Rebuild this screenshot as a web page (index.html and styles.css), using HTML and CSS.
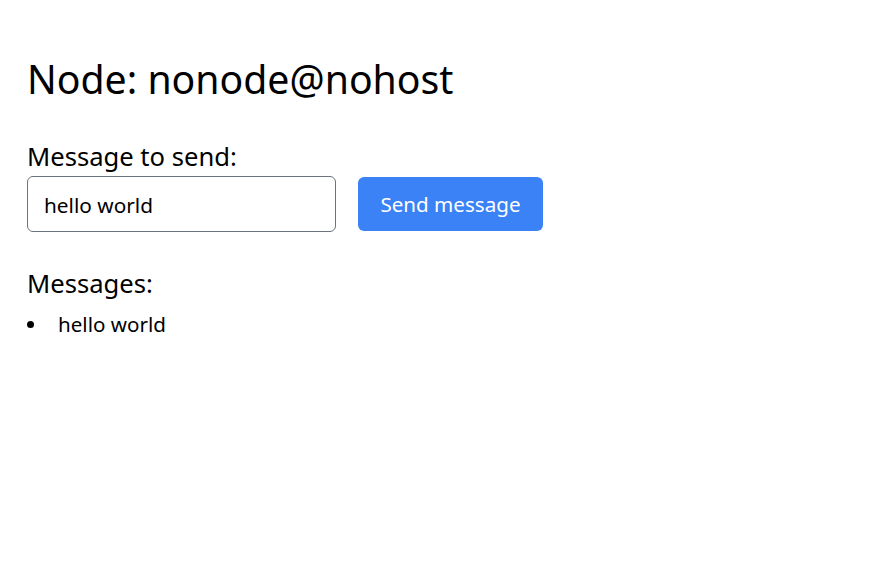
FILE: index.html
```html
<!DOCTYPE html>
<html lang="en">
<head>
<meta charset="utf-8">
<title>Node</title>
<link rel="stylesheet" href="styles.css">
</head>
<body>
<main class="page">
  <h1 class="title">Node: nonode@nohost</h1>
  <form class="send-form">
    <label class="label" for="msg">Message to send:</label>
    <div class="row">
      <input class="input" id="msg" type="text" value="hello world">
      <button class="button" type="button">Send message</button>
    </div>
  </form>
  <section class="messages">
    <h2 class="label">Messages:</h2>
    <ul class="list">
      <li class="item">hello world</li>
    </ul>
  </section>
</main>
</body>
</html>
```
FILE: styles.css
```css
* { box-sizing: border-box; }
html, body { margin: 0; padding: 0; background: #fff; }
body {
  font-family: "Noto Sans", "Open Sans", sans-serif;
  color: #000;
}
.page {
  padding: 55px 27px 0;
}
.title {
  margin: 0;
  font-size: 39.2px;
  line-height: 48px;
  font-weight: 400;
}
.send-form {
  margin-top: 38px;
  display: flex;
  flex-direction: column;
}
.label {
  display: block;
  margin: 0;
  font-size: 25.6px;
  line-height: 32px;
  font-weight: 400;
}
.row {
  margin-top: 3px;
  display: flex;
  align-items: center;
  gap: 22px;
}
.input {
  width: 309px;
  height: 56px;
  border: 1px solid #6b7280;
  border-radius: 6px;
  padding: 2px 16px 0;
  font-family: inherit;
  font-size: 20.8px;
  color: #000;
  outline: none;
}
.button {
  width: 185px;
  height: 54px;
  border: 0;
  border-radius: 6px;
  background: #3b82f6;
  color: #fff;
  font-family: inherit;
  font-size: 20.6px;
  padding: 0;
}
.messages {
  margin-top: 36px;
}
.list {
  list-style: none;
  margin: 10px 0 0;
  padding: 0;
}
.item {
  display: flex;
  align-items: center;
  font-size: 20.6px;
  line-height: 28px;
}
.item::before {
  content: "";
  width: 7px;
  height: 7px;
  border-radius: 50%;
  background: #000;
  margin-right: 24px;
  margin-top: 1px;
}
```
